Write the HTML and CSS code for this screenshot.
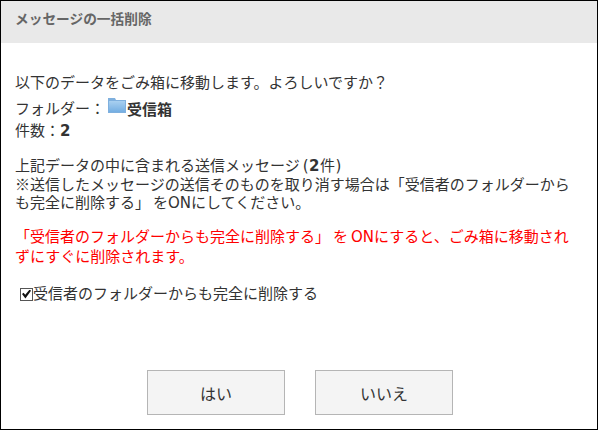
FILE: index.html
```html
<!DOCTYPE html>
<html lang="ja">
<head>
<meta charset="utf-8">
<title>メッセージの一括削除</title>
<link rel="stylesheet" href="styles.css">
</head>
<body>
<div class="dialog">
  <h1 class="title">メッセージの一括削除</h1>
  <div class="content">
    <p class="lead">以下のデータをごみ箱に移動します。よろしいですか？</p>
    <p class="folder">フォルダー：<svg class="folder-icon" width="18" height="15" viewBox="0 0 18 15"><defs><linearGradient id="fg" x1="0" y1="0" x2="0" y2="1"><stop offset="0" stop-color="#a9d0f0"/><stop offset="1" stop-color="#74aee2"/></linearGradient></defs><path d="M0 0h7l1 2h10v13H0z" fill="#7fb0de"/><rect x="1" y="3" width="16" height="11" fill="url(#fg)"/></svg><b>受信箱</b></p>
    <p class="count">件数：<b>2</b></p>
    <p class="sent">上記データの中に含まれる送信メッセージ<span class="paren">(<b>2</b>件)</span><br><span class="mark">※</span>送信したメッセージの送信そのものを取り消す場合は「受信者のフォルダーからも完全に削除する<span class="close">」</span>をONにしてください。</p>
    <p class="warning">「受信者のフォルダーからも完全に削除する<span class="close">」</span>を<span class="on">ON</span>にすると、ごみ箱に移動されずにすぐに削除されます。</p>
    <label class="check"><input type="checkbox" checked>受信者のフォルダーからも完全に削除する</label>
  </div>
  <div class="buttons">
    <button class="btn" type="button">はい</button>
    <button class="btn" type="button">いいえ</button>
  </div>
</div>
</body>
</html>
```
FILE: styles.css
```css
* { box-sizing: border-box; }
html, body { margin: 0; padding: 0; }
body {
  width: 598px;
  height: 430px;
  overflow: hidden;
  background: #fff;
  font-family: "DejaVu Sans", "Noto Sans CJK JP", sans-serif;
  font-size: 15px;
  color: #333;
}
.dialog {
  width: 598px;
  height: 430px;
  border: 1px solid #000;
  display: flex;
  flex-direction: column;
}
.title {
  margin: 0;
  height: 42px;
  padding: 0 14px;
  background: #e9e9e9;
  color: #666;
  font-size: 13.7px;
  font-weight: bold;
  line-height: 36px;
}
.content {
  flex: 1;
  padding: 30px 14px 0;
  line-height: 20px;
}
.content p { margin: 0; }
.lead { height: 20px; }
.folder { margin-top: 6px !important; display: flex; align-items: flex-start; height: 20px; }
.folder-icon { margin: -1px 1px 0 3px; flex: none; }
.folder b { margin-top: 1px; }
.count { margin-top: 2px !important; }
.sent { margin-top: 16px !important; line-height: 18px; }
.paren { margin-left: 3px; letter-spacing: 0.5px; }
.mark { font-family: "Noto Sans CJK JP", sans-serif; }
.close { margin-right: 3px; }
.on { margin-left: 3px; }
.warning { margin-top: 15px !important; padding-right: 14px; color: #f00; line-height: 20px; }
.check { display: flex; align-items: center; margin-top: 16px; padding-left: 5px; height: 22px; }
.check input {
  appearance: none;
  margin: 0;
  width: 13px;
  height: 13px;
  flex: none;
  position: relative;
  background: #fff;
  border: 1px solid #555;
  border-radius: 0;
}
.check input::before {
  content: "";
  position: absolute;
  left: 1px;
  top: 1px;
  width: 9px;
  height: 9px;
  background: #111;
  clip-path: polygon(0 50%, 18% 35%, 36% 58%, 85% 0, 100% 15%, 38% 100%);
}
.buttons {
  display: flex;
  justify-content: center;
  gap: 30px;
  padding: 0 0 14px 2px;
}
.btn {
  width: 138px;
  height: 45px;
  padding: 0;
  background: #f4f4f4;
  border: 1px solid #b5b5b5;
  color: #333;
  font: inherit;
  font-size: 16px;
}
```
